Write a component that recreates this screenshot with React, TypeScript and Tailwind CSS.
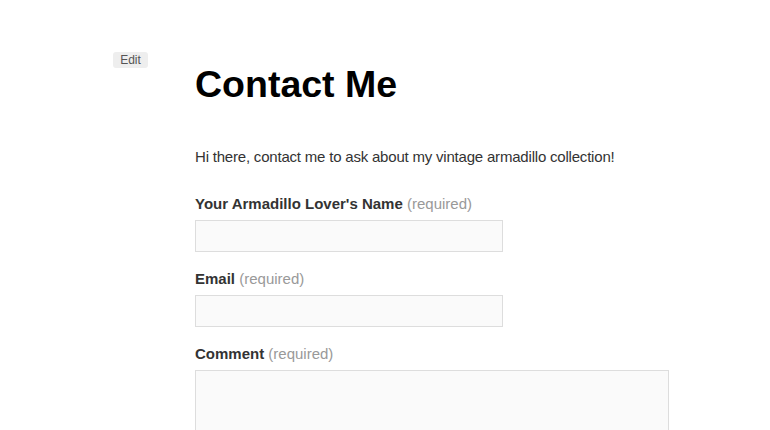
import React from "react";

const font = { fontFamily: '"Liberation Sans", Arial, Helvetica, sans-serif' };

function Field({ label, textarea }: { label: string; textarea?: boolean }) {
  return (
    <div className="flex flex-col">
      <label className="text-[15px] leading-[20px] font-bold text-[#333] mb-[6px]">
        {label} <span className="font-normal text-[#999]">(required)</span>
      </label>
      {textarea ? (
        <textarea className="w-[474px] h-[120px] bg-[#fafafa] border border-[#dddddd] outline-none resize-none" />
      ) : (
        <input className="w-[308px] h-[32px] bg-[#fafafa] border border-[#dddddd] outline-none" />
      )}
    </div>
  );
}

export default function App() {
  return (
    <div className="w-[770px] h-[430px] bg-white overflow-hidden" style={font}>
      <div className="flex pt-[52px]">
        <div className="w-[195px] flex justify-start pl-[113px]">
          <span className="w-[35px] h-[16px] bg-[#eeeeee] rounded-[3px] text-[12px] leading-[16px] text-[#555] text-center">
            Edit
          </span>
        </div>
        <div className="flex flex-col pt-[10px]">
          <h1 className="text-[37.5px] leading-[44px] font-bold text-black m-0">Contact Me</h1>
          <p className="mt-[39px] text-[15px] leading-[24px] tracking-[-0.2px] text-[#333]">
            Hi there, contact me to ask about my vintage armadillo collection!
          </p>
          <div className="mt-[25px] flex flex-col gap-[17px]">
            <Field label="Your Armadillo Lover's Name" />
            <Field label="Email" />
            <Field label="Comment" textarea />
          </div>
        </div>
      </div>
    </div>
  );
}
